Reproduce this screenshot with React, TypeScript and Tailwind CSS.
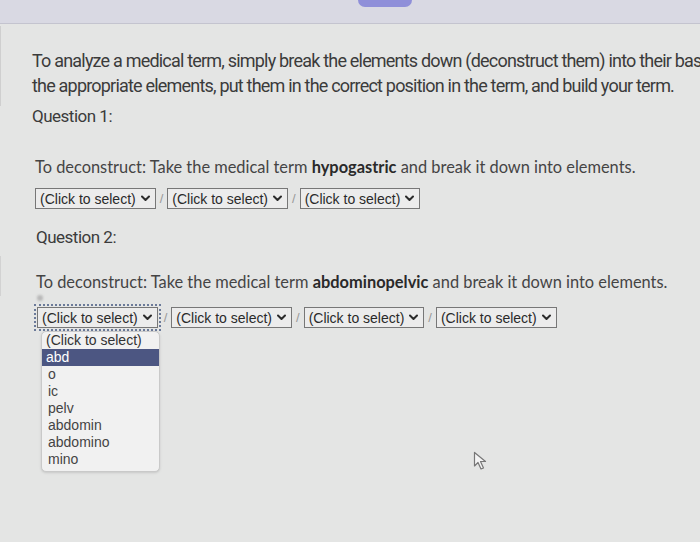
import React from 'react'

const condensed = { fontFamily: '"Liberation Sans Narrow", Roboto, sans-serif' }

function Chevron() {
  return (
    <svg width="9" height="7" viewBox="0 0 9 7" className="ml-[5px] shrink-0">
      <path d="M1 1.5 L4.5 5 L8 1.5" fill="none" stroke="#2b2b2b" strokeWidth="2" strokeLinecap="round" strokeLinejoin="round" />
    </svg>
  )
}

function FakeSelect({ focused = false }: { focused?: boolean }) {
  const box = (
    <span className="inline-flex h-[21px] items-center border border-[#777] bg-[#ececec] pl-[4px] pr-[5px] text-[14px] leading-none text-[#2a2a2a] [font-family:'Liberation_Sans',Arial,sans-serif]">
      (Click to select)
      <Chevron />
    </span>
  )
  if (!focused) return box
  return <span className="inline-flex p-[2px] outline-2 outline-dotted outline-[#6b7a99] -outline-offset-1">{box}</span>
}

function Slash() {
  return <span className="mx-[4px] text-[13px] text-[#999] [font-family:'Liberation_Sans',Arial,sans-serif]">/</span>
}

const options = ['o', 'ic', 'pelv', 'abdomin', 'abdomino', 'mino']

export default function App() {
  return (
    <div className="h-[542px] w-[700px] overflow-hidden bg-[#e4e5e4] text-[#3b3b3b]">
      <div className="flex h-[24px] border-b border-[#c4c4cf] bg-[#d9d9e3]">
        <div className="ml-[358px] h-[7px] w-[54px] rounded-b-[8px] bg-[#8f8fd9]" />
      </div>

      <div className="relative flex">
        <div className="flex w-[5px] flex-col gap-[150px] pt-[2px]">
          <div className="h-[80px] border-r border-[#cfcfcf]" />
          <div className="h-[40px] border-y border-r border-[#d2d2d2]" />
        </div>
        <div className="pl-[31px] pt-[24px]">
          <p className="whitespace-nowrap text-[18px] leading-[25px] tracking-[-0.8px]" style={condensed}>
            To analyze a medical term, simply break the elements down (deconstruct them) into their bas
            <br />
            the appropriate elements, put them in the correct position in the term, and build your term.
          </p>
          <p className="mt-[6px] text-[17px] leading-[24px] tracking-[-0.5px]" style={condensed}>
            Question 1:
          </p>

          <p className="ml-[3px] mt-[27px] text-[16.4px] leading-[24px] text-[#444] [font-family:Lato,sans-serif]">
            To deconstruct: Take the medical term <b className="text-[#2a2a2a]">hypogastric</b> and break it down into elements.
          </p>
          <div className="ml-[3px] mt-[9px] flex items-center">
            <FakeSelect />
            <Slash />
            <FakeSelect />
            <Slash />
            <FakeSelect />
          </div>
          <p className="ml-[4px] mt-[16px] text-[17px] leading-[24px] tracking-[-0.5px]" style={condensed}>
            Question 2:
          </p>

          <p className="ml-[4px] mt-[21px] text-[16.4px] leading-[24px] text-[#444] [font-family:Lato,sans-serif]">
            To deconstruct: Take the medical term <b className="text-[#2a2a2a]">abdominopelvic</b> and break it down into elements.
          </p>
          <div className="relative ml-[3px] mt-[11px] flex items-center">
            <FakeSelect focused />
            <Slash />
            <FakeSelect />
            <Slash />
            <FakeSelect />
            <Slash />
            <FakeSelect />

            <div className="absolute left-[6px] top-[26px] w-[119px] rounded-[5px] border border-[#c9c9c9] bg-[#f1f1f1] pb-[3px] text-[14px] leading-[17px] text-[#444] shadow-sm [font-family:'Liberation_Sans',Arial,sans-serif]">
              <div className="px-[4px] text-[#333]">(Click to select)</div>
              <div className="bg-[#4c5682] px-[4px] text-white">abd</div>
              {options.map((o) => (
                <div key={o} className="px-[6px]">
                  {o}
                </div>
              ))}
            </div>
          </div>
        </div>

        <div className="absolute left-[37px] top-[271px] h-[6px] w-[6px] rounded-full bg-[#b8b8b8] blur-[1px]" />
        <svg className="absolute left-[473px] top-[427px]" width="14" height="20" viewBox="0 0 14 20">
          <path d="M1.5 1.5 L1.5 15 L5 11.5 L8 18 L10.5 17 L7.5 10.5 L12.5 10.5 Z" fill="#f4f4f4" stroke="#777" strokeWidth="1.2" strokeLinejoin="round" />
        </svg>
      </div>
    </div>
  )
}
